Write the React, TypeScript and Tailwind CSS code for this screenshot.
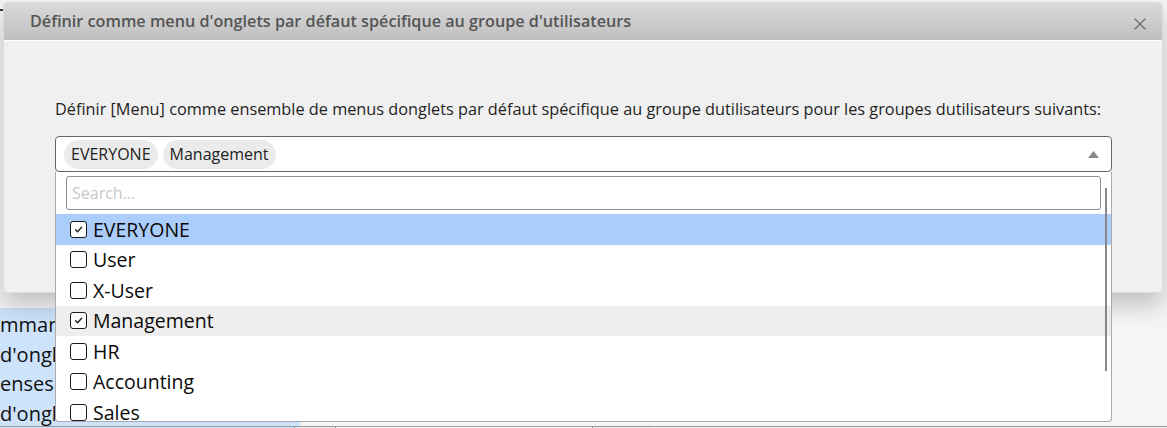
import { X } from "lucide-react";

const groups = [
  { name: "EVERYONE", checked: true, tone: "bg-[#aacdfb]" },
  { name: "User", checked: false, tone: "" },
  { name: "X-User", checked: false, tone: "" },
  { name: "Management", checked: true, tone: "bg-[#eeeeee]" },
  { name: "HR", checked: false, tone: "" },
  { name: "Accounting", checked: false, tone: "" },
  { name: "Sales", checked: false, tone: "" },
];

const backRows = ["mmandes", "d'onglets", "enses de", "d'onglets"];

function CheckBox({ checked }: { checked: boolean }) {
  return (
    <span className="flex h-[17px] w-[17px] shrink-0 items-center justify-center rounded-[3px] border-[1.5px] border-[#1a1a1a] bg-white">
      {checked ? (
        <svg width="11" height="11" viewBox="0 0 11 11" fill="none">
          <path d="M2.5 5.8 L4.6 7.8 L8.6 3.2" stroke="#1a1a1a" strokeWidth="1.3" strokeLinecap="round" strokeLinejoin="round" />
        </svg>
      ) : null}
    </span>
  );
}

export default function App() {
  return (
    <div className="relative h-[428px] w-[1167px] overflow-hidden bg-[#f5f5f5] font-['Open_Sans',sans-serif]">
      {/* page behind the dialog */}
      <div className="flex h-full flex-col">
        <div className="h-[308px] shrink-0 pt-[9px]">
          <div className="h-[2px] w-[4px] bg-[#333]" />
        </div>
        <div className="flex shrink-0 flex-col">
          {backRows.map((row, i) => (
            <div key={i} className="flex h-[29.5px] w-[300px] bg-[#cde2fb]">
              <div className="w-[55px] overflow-hidden whitespace-nowrap pt-[2px] text-[20px] leading-[29.5px] text-[#111]">
                {row}
              </div>
            </div>
          ))}
        </div>
        <div className="flex h-[8px] shrink-0 border-t border-[#999]">
          <div className="w-[294px] bg-[#cde2fb]" />
          <div className="w-[41px] border-l border-[#999] bg-[#f0f0f0]" />
          <div className="w-[257px] border-l border-[#999] bg-white" />
          <div className="w-[58px] border-l border-[#999] bg-[#f0f0f0]" />
        </div>
      </div>

      {/* dialog */}
      <div className="absolute left-[3px] top-[2px] flex h-[291px] w-[1160px] flex-col rounded-[4px] border border-[#dcdcdc] bg-[#f0f0f0] shadow-[0_12px_24px_rgba(0,0,0,0.22)]">
        <div className="flex h-[38px] shrink-0 items-center justify-between rounded-t-[4px] border-b border-white bg-gradient-to-b from-[#dadada] to-[#bfbfbf] pl-[26px] pr-[12px]">
          <span className="text-[16.2px] font-semibold text-[#555]">
            Définir comme menu d'onglets par défaut spécifique au groupe d'utilisateurs
          </span>
          <X className="mt-[4px] h-[20px] w-[20px] text-[#666]" strokeWidth={1.3} />
        </div>
        <div className="px-[51px] pt-[58px]">
          <p className="mb-[16px] whitespace-nowrap text-[16.3px] leading-[21px] text-[#1f1f1f]">
            Définir [Menu] comme ensemble de menus donglets par défaut spécifique au groupe dutilisateurs pour les groupes dutilisateurs suivants:
          </p>
          <div className="relative w-[1057px]">
            <div className="flex h-[36px] items-center gap-[5px] rounded-[4px] border border-[#666] bg-white pl-[8px] pr-[12px]">
              <span className="rounded-full bg-[#ebebeb] px-[7px] text-[16px] leading-[29px] text-[#222]">EVERYONE</span>
              <span className="rounded-full bg-[#ebebeb] px-[7px] text-[16px] leading-[29px] text-[#222]">Management</span>
              <svg className="ml-auto" width="11" height="7" viewBox="0 0 11 7">
                <path d="M0 7 L5.5 0 L11 7 Z" fill="#888" />
              </svg>
            </div>
            <div className="absolute left-0 right-0 top-full flex h-[250px] flex-col overflow-hidden rounded-b-[4px] border border-t-0 border-[#aaa] bg-white">
              <div className="pb-[4px] pl-[10px] pr-[10px] pt-[4px]">
                <div className="flex h-[34px] items-center rounded-[3px] border border-[#8c8c9a] bg-white pl-[5px] text-[16px] text-[#c8c8c8]">
                  Search...
                </div>
              </div>
              <div className="relative flex-1">
                {groups.map((g) => (
                  <div key={g.name} className={`flex h-[30.5px] items-center gap-[6px] pl-[14px] ${g.tone}`}>
                    <CheckBox checked={g.checked} />
                    <span className="text-[19.5px] leading-none text-[#0a0a0a]">{g.name}</span>
                  </div>
                ))}
                <div className="absolute right-[4px] top-[-26px] h-[183px] w-[2.5px] bg-[#888]" />
              </div>
            </div>
          </div>
        </div>
      </div>
    </div>
  );
}
